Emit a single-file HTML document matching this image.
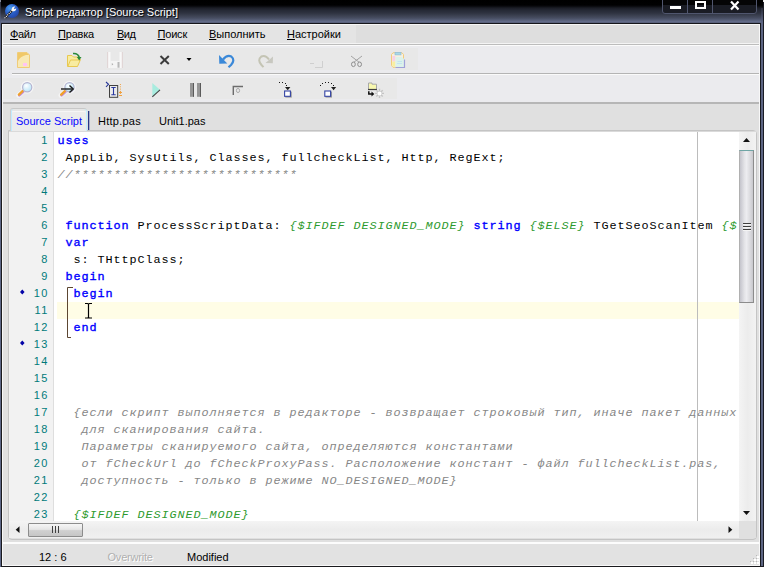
<!DOCTYPE html>
<html><head><meta charset="utf-8">
<style>
*{margin:0;padding:0;box-sizing:border-box}
html,body{width:764px;height:567px;overflow:hidden;background:#e0e0e0;font-family:"Liberation Sans",sans-serif;}
.abs,#win div,#win svg{position:absolute}
#win{position:absolute;left:0;top:0;width:764px;height:567px;background:#e0e0e0;overflow:hidden}
#title{left:0;top:0;width:764px;height:23px;background:linear-gradient(#000 0,#010102 5px,#0c0d12 6.5px,#1b1d26 8px,#262a36 10.5px,#2e3240 13px,#3b4050 15.5px,#474d61 18px,#5a627c 20.5px,#626b88 21.5px,#565d76 23px)}
#tdark{left:1px;top:23px;width:760px;height:1px;background:#15161b}
#twhite{left:2px;top:24px;width:758px;height:1px;background:#f6f6f6}
#ttext{left:25px;top:6px;color:#fff;font-size:11px;white-space:nowrap;text-shadow:1px 1px 1px #000}
#lb0{left:0;top:2px;width:1px;height:565px;background:linear-gradient(#30343f 0,#3a4054 10px,#5c6686 20px,#5c6686 100%)}
#ctl{left:0;top:0;width:1px;height:2px;background:#8a8e9c}
#ctr{left:763px;top:0;width:1px;height:2px;background:#e8e8e8}
#lb1{left:1px;top:23px;width:1px;height:543px;background:#1a1a1e}
#lb2{left:2px;top:24px;width:1px;height:541px;background:#f8f8f8}
#rb0{left:760px;top:23px;width:1px;height:543px;background:#1a1c22}
#rb1{left:761px;top:8px;width:2px;height:559px;background:linear-gradient(#2a2d3a 0,#5c6482 14px,#5c6482 100%)}
#rb2{left:763px;top:0;width:1px;height:567px;background:#1a1c24}
#rbw{left:759px;top:24px;width:1px;height:541px;background:#f8f8f8}
#bbw{left:2px;top:565px;width:758px;height:1px;background:#f8f8f8}
#bb{left:1px;top:566px;width:762px;height:1px;background:#1a1a1e}
#menu{left:3px;top:25px;width:756px;height:18px;background:linear-gradient(90deg,#e4e4e4 0,#e4e4e4 353px,#dedede 353px)}
#menuline0{left:3px;top:43px;width:756px;height:1px;background:#f4f4f4}
#menu span{position:absolute;top:3px;font-size:11px;color:#000;white-space:nowrap}
#menuline{left:3px;top:44px;width:756px;height:1px;background:#bcbcbc}
#menuline2{left:3px;top:45px;width:756px;height:1px;background:#fbfbfb}
#tbarea{left:3px;top:46px;width:756px;height:56px;background:#ebebee}
#tb1{left:3px;top:48px;width:415px;height:22px;background:#e8e8e8}
#tb2{left:3px;top:78px;width:394px;height:21px;background:#e8e8e8}
#tbsep{left:12px;top:73px;width:747px;height:1px;background:#b4b4b4}
#tbsep2{left:12px;top:74px;width:747px;height:1px;background:#fafafa}
#tbbot{left:3px;top:102px;width:756px;height:2px;background:#b6b6b6}
#tab1{left:10px;top:108px;width:77px;height:23px;background:#ececec;border-left:1px solid #d0d0d0;border-top:1px solid #c8c8c8;border-radius:3px 3px 0 0;box-shadow:inset 1px 0 0 #c0ecff,inset -1px 0 0 #c0f0ff,inset 0 2px 0 #e6e6e6,inset 0 3px 0 #f6f6f6}
#tab1r{left:88px;top:111px;width:1px;height:19px;background:#283888;box-shadow:1px 0 0 rgba(40,56,136,0.3)}
#edtop{left:9px;top:131px;width:747px;height:1px;background:#dadada}
.tabt{top:115px;font-size:11px;white-space:nowrap}
#panel{left:8px;top:130px;width:749px;height:410px;border:1px solid #c4c4c4;border-radius:0 4px 4px 4px;background:#e0e0e0}
#editor{left:9px;top:131px;width:730px;height:390px;background:#fff;overflow:hidden}
#gutter{left:0;top:0;width:45px;height:390px;background:#f2f2f2;border-right:1px solid #dedede}
.ln{left:0;width:39.7px;text-align:right;font-family:"Liberation Sans",sans-serif;font-size:11px;letter-spacing:1.4px;color:#007a7a;height:17px;line-height:17px}
.cl{left:48.5px;height:17px;line-height:19px;font-family:"Liberation Mono",monospace;font-size:11.8px;letter-spacing:0.919px;white-space:pre;color:#000}
.k{color:#0000ff;-webkit-text-stroke:0.35px #0000ff}
.d{color:#2e9a2e;font-style:italic}
.c{color:#878787;font-style:italic}
#cur{left:48px;top:171px;width:682px;height:17px;background:#fffde6}
#margin{left:688px;top:0;width:1px;height:390px;background:#bcbcbc}
#vs{left:739px;top:131px;width:17px;height:390px;background:linear-gradient(90deg,#f4f4f4,#ececec 50%,#f2f2f2)}
#vthumb{left:739px;top:150px;width:15px;height:153px;border:1px solid #8c8c8c;border-top-color:#6fa5a5;border-left-color:#b0b0b0;background:linear-gradient(90deg,#c4c4cc 0,#e4e4e8 35%,#ececf0 50%,#dcdce0 75%,#c8c8cc 100%)}
#hs{left:9px;top:521px;width:730px;height:17px;background:linear-gradient(#f4f4f4,#ececec 50%,#f0f0f0)}
#hthumb{left:28px;top:523px;width:55px;height:14px;border:1px solid #8c8c8c;border-radius:1px;background:linear-gradient(#f6f6f6 0,#e6e6e6 45%,#d0d0d0 55%,#c6c6c6 100%)}
#corner{left:739px;top:521px;width:17px;height:17px;background:#e0e0e0}
#stw{left:3px;top:542px;width:756px;height:2px;background:#fcfcfc}
#status{left:3px;top:544px;width:756px;height:21px;background:#e2e2e2}
#status span{position:absolute;top:7px;font-size:11px;white-space:nowrap}

</style></head><body>
<div id="win">
<div id="title"></div>
<div id="tdark"></div>
<div id="twhite"></div>
<div id="ttext">Script редактор [Source Script]</div>
<div id="menu">
<span style="left:7px;letter-spacing:-0.4px"><u>Ф</u>айл</span>
<span style="left:55px;letter-spacing:-0.2px"><u>П</u>равка</span>
<span style="left:114px;letter-spacing:-0.5px"><u>В</u>ид</span>
<span style="left:154.5px;letter-spacing:-0.2px"><u>П</u>оиск</span>
<span style="left:206px"><u>В</u>ыполнить</span>
<span style="left:284px"><u>Н</u>астройки</span>
</div>
<div id="menuline0"></div>
<div id="menuline"></div>
<div id="menuline2"></div>
<div id="tbarea"></div>
<div id="tb1"></div>
<div id="tb2"></div>
<div id="tbsep"></div>
<div id="tbsep2"></div>
<div id="tbbot"></div>
<div id="panel"></div>
<div id="tab1"></div>
<div id="tab1r"></div>
<div class="tabt" style="left:16px;color:#0808ff">Source Script</div>
<div class="tabt" style="left:98px;color:#000;letter-spacing:0.25px">Http.pas</div>
<div class="tabt" style="left:159px;color:#000">Unit1.pas</div>
<div id="editor">
<div id="gutter"></div>
<div id="cur"></div>
<div id="margin"></div>
<div class="ln" style="top:1px">1</div>
<div class="cl" style="top:1px"><span class="k">uses</span></div>
<div class="ln" style="top:18px">2</div>
<div class="cl" style="top:18px"> AppLib, SysUtils, Classes, fullcheckList, Http, RegExt;</div>
<div class="ln" style="top:35px">3</div>
<div class="cl" style="top:35px"><span class="c">//****************************</span></div>
<div class="ln" style="top:52px">4</div>
<div class="ln" style="top:69px">5</div>
<div class="ln" style="top:86px">6</div>
<div class="cl" style="top:86px"> <span class="k">function</span> ProcessScriptData: <span class="d">{$IFDEF DESIGNED_MODE}</span> <span class="k">string</span> <span class="d">{$ELSE}</span> TGetSeoScanItem <span class="d">{$</span></div>
<div class="ln" style="top:103px">7</div>
<div class="cl" style="top:103px"> <span class="k">var</span></div>
<div class="ln" style="top:120px">8</div>
<div class="cl" style="top:120px">  s: THttpClass;</div>
<div class="ln" style="top:137px">9</div>
<div class="cl" style="top:137px"> <span class="k">begin</span></div>
<div class="ln" style="top:154px">10</div>
<div class="cl" style="top:154px">  <span class="k">begin</span></div>
<div class="ln" style="top:171px">11</div>
<div class="ln" style="top:188px">12</div>
<div class="cl" style="top:188px">  <span class="k">end</span></div>
<div class="ln" style="top:205px">13</div>
<div class="ln" style="top:222px">14</div>
<div class="ln" style="top:239px">15</div>
<div class="ln" style="top:256px">16</div>
<div class="ln" style="top:273px">17</div>
<div class="cl" style="top:273px">  <span class="c">{если скрипт выполняется в редакторе - возвращает строковый тип, иначе пакет данных</span></div>
<div class="ln" style="top:290px">18</div>
<div class="cl" style="top:290px">   <span class="c">для сканирования сайта.</span></div>
<div class="ln" style="top:307px">19</div>
<div class="cl" style="top:307px">   <span class="c">Параметры сканируемого сайта, определяются константами</span></div>
<div class="ln" style="top:324px">20</div>
<div class="cl" style="top:324px">   <span class="c">от fCheckUrl до fCheckProxyPass. Расположение констант - файл fullcheckList.pas,</span></div>
<div class="ln" style="top:341px">21</div>
<div class="cl" style="top:341px">   <span class="c">доступность - только в режиме NO_DESIGNED_MODE}</span></div>
<div class="ln" style="top:358px">22</div>
<div class="ln" style="top:375px">23</div>
<div class="cl" style="top:375px">  <span class="d">{$IFDEF DESIGNED_MODE}</span></div>
</div>
<div id="vs"></div>
<div id="vthumb"></div>
<div id="hs"></div>
<div id="hthumb"></div>
<div id="corner"></div>
<div id="edtop"></div>
<div id="stw"></div>
<div id="status">
<span style="left:36px;color:#000">12 : 6</span>
<span style="left:104.5px;color:#b0b0b0;text-shadow:1px 1px 0 #fff;letter-spacing:-0.2px">Overwrite</span>
<span style="left:184px;color:#000">Modified</span>
</div>
<div id="lb0"></div>
<div id="lb1"></div>
<div id="lb2"></div>
<div id="rbw"></div>
<div id="rb0"></div>
<div id="rb1"></div>
<div id="rb2"></div>
<div id="bbw"></div>
<div id="bb"></div>
<div id="ctl"></div>
<div id="ctr"></div>
<!-- title icon -->
<svg style="left:2px;top:2px" width="20" height="20" viewBox="2 2 20 20">
<defs><radialGradient id="gl" cx="0.35" cy="0.3" r="0.75"><stop offset="0" stop-color="#4aa0f0"/><stop offset="0.5" stop-color="#2a62cc"/><stop offset="1" stop-color="#2446a8"/></radialGradient></defs>
<circle cx="12" cy="11" r="7" fill="url(#gl)"/>
<path d="M4.6 18.2 L12.4 10.2" stroke="#0c0c14" stroke-width="2.2"/>
<path d="M4.6 18.2 L12.4 10.2" stroke="#f4f4f4" stroke-width="1.3" stroke-dasharray="1.1 0.9"/>
<path d="M11.3 10 L12.2 7.6 Q13.5 6.2 15.4 6.6 L13.9 8.3 L14.6 9.2 L16.3 8.2 Q16.4 10 15 11 L12.6 11.6 Z" fill="#f6f6f6"/>
</svg>
<!-- window controls -->
<svg style="left:660px;top:0" width="100" height="16" viewBox="660 0 100 16">
<path d="M662.5 0 V11 Q662.5 13.5 665 13.5 H754 Q756.5 13.5 756.5 11 V0" fill="#1a1c24" stroke="#50566e" stroke-width="1"/>
<rect x="663" y="0" width="93" height="5" fill="#050506"/>
<path d="M687.5 0 V13.5 M712.5 0 V13.5" stroke="#50566e" stroke-width="1"/>
<rect x="670" y="6" width="11" height="3" fill="#fff"/>
<rect x="696" y="2" width="9" height="6" fill="none" stroke="#fff" stroke-width="2"/>
<path d="M731 1.5 L738.5 9.5 M738.5 1.5 L731 9.5" stroke="#fff" stroke-width="2.2"/>
</svg>
<!-- toolbar 1 -->
<svg style="left:12px;top:48px" width="410" height="24" viewBox="12 48 410 24">
<!-- new -->
<path d="M17.5 52.5 H27 L29.5 55 V67.5 H17.5 Z" fill="#f8e9b4" stroke="#f0cc78" stroke-width="1"/>
<path d="M18 53 H27 L29 55 L26 55 Q20 56.5 18 61 Z" fill="#f0c868"/>
<rect x="23" y="63" width="4" height="3" fill="#ffc4f4"/>
<!-- open -->
<path d="M67.5 55.5 H72 L73.5 57 H78.5 V59 L80.5 59.5 L77.5 66.5 H67.5 Z" fill="#f8eca0" stroke="#e8c850" stroke-width="1"/>
<path d="M68 66 L70.5 60 H80" fill="none" stroke="#e8c850" stroke-width="1"/>
<path d="M73 53.5 Q78 53 79.3 57.5" fill="none" stroke="#2a8a3a" stroke-width="1.6"/>
<path d="M76.8 57 H81.5 L79.2 60.5 Z" fill="#2a8a3a"/>
<!-- save (disabled) -->
<rect x="108" y="52" width="2.5" height="16" fill="#f8f8f8"/>
<rect x="119.5" y="52" width="2.5" height="16" fill="#f8f8f8"/>
<rect x="110.5" y="61" width="9" height="7" fill="#f4f4f4"/>
<path d="M107.7 52 V68 M122.3 52 V68" stroke="#dccccc" stroke-width="0.8"/>
<rect x="117.5" y="62" width="2" height="5.7" fill="#b8b8b8"/>
<path d="M111.8 63 L113.3 64.3 L111.8 65.6 Z" fill="#a8a8a8"/>
<!-- X -->
<path d="M160.5 56 L168.8 64 M168.8 56 L160.5 64" stroke="#3c3c3c" stroke-width="2"/>
<path d="M186.5 58 H191.5 L189 61 Z" fill="#000"/>
<!-- undo -->
<path d="M223 59.5 Q227 54.5 231.3 56.5 Q235.5 60 231 65 L228.5 67.3" fill="none" stroke="#3a88d8" stroke-width="2.2"/>
<path d="M219 55 L219.3 63.8 L227.3 63.5 Z" fill="#3a88d8"/>
<!-- redo -->
<path d="M269 59.5 Q265.5 54.5 261.3 56.5 Q257 60 261.5 65 L263.5 67.2" fill="none" stroke="#c4c4b4" stroke-width="2"/>
<path d="M273 56.5 L272.8 63.3 L265.5 63 Z" fill="#c8c8c0"/>
<!-- copy disabled -->
<path d="M310 63.5 H314 M322.5 61 V67.5 H315" fill="none" stroke="#cfcfcf" stroke-width="1"/>
<!-- cut -->
<path d="M351 56 L359.2 62.3 M362 56 L353.8 62.3" stroke="#9a9a9a" stroke-width="0.9"/>
<ellipse cx="353.4" cy="64.3" rx="1.9" ry="2.3" fill="none" stroke="#8e8e8e" stroke-width="1"/>
<ellipse cx="359.6" cy="64.3" rx="1.9" ry="2.3" fill="none" stroke="#8e8e8e" stroke-width="1"/>
<!-- paste -->
<path d="M393 52.8 H402 L403.5 54.5 V67.3 H393 L391.5 65.5 V54.5 Z" fill="#f6f0e0" stroke="#f2cc7c" stroke-width="1"/>
<rect x="392.3" y="56" width="3" height="5.5" fill="#f8d0e4"/>
<rect x="392.3" y="61.5" width="3" height="5" fill="#f8f0a0"/>
<rect x="395" y="52.3" width="6" height="2.6" fill="#a8d8e8" stroke="#88b8d8" stroke-width="0.6"/>
<path d="M395.5 57 H402 L404.5 59.5 V67.5 H395.5 Z" fill="#dcf2ea"/>
<path d="M404.5 59.5 V67.5 H395.5" fill="none" stroke="#a0a0d8" stroke-width="1.2"/>
<path d="M397.5 61.5 H402 M397 63.5 H402" stroke="#c4e4f0" stroke-width="1"/>
</svg>
<!-- toolbar 2 -->
<svg style="left:12px;top:78px" width="390" height="24" viewBox="12 78 390 24">
<defs><radialGradient id="lens" cx="0.4" cy="0.35" r="0.7"><stop offset="0" stop-color="#fff"/><stop offset="1" stop-color="#b4e4f8"/></radialGradient></defs>
<g>
<circle cx="27.2" cy="87.2" r="6.4" fill="#f6f6f6"/>
<path d="M23.5 91 L18.6 95.4" stroke="#f4f4f4" stroke-width="5" stroke-linecap="round"/>
<path d="M23.2 91.8 L19.3 95.4" stroke="#c490d8" stroke-width="2.6" stroke-linecap="round"/>
<path d="M22.6 91 L18.9 94.6" stroke="#f0a028" stroke-width="2.4" stroke-linecap="round"/>
<circle cx="27.2" cy="87.2" r="4.6" fill="url(#lens)" stroke="#b4b4d0" stroke-width="1.2"/>
</g>
<g transform="translate(42.3 0)">
<circle cx="27.2" cy="87.2" r="6.4" fill="#f6f6f6"/>
<path d="M23.5 91 L18.6 95.4" stroke="#f4f4f4" stroke-width="5" stroke-linecap="round"/>
<path d="M23.2 91.8 L19.3 95.4" stroke="#c490d8" stroke-width="2.6" stroke-linecap="round"/>
<path d="M22.6 91 L18.9 94.6" stroke="#f0a028" stroke-width="2.4" stroke-linecap="round"/>
<circle cx="27.2" cy="87.2" r="4.6" fill="url(#lens)" stroke="#b4b4d0" stroke-width="1.2"/>
</g>
<path d="M61 89 H72.5" stroke="#1c1c1c" stroke-width="1.4"/>
<path d="M69.5 85.5 L73.2 89 L69.5 92.5" fill="none" stroke="#1c1c1c" stroke-width="1.4"/>
<!-- run to cursor -->
<path d="M106 82 L108.5 84.3 L106 86.8" fill="none" stroke="#283898" stroke-width="1.1"/>
<rect x="109.5" y="85.5" width="8.2" height="11.8" fill="#ececec" stroke="#404040" stroke-width="1"/>
<path d="M111.3 87.5 H115.7 M111.3 94.8 H115.7 M113.5 87.5 V94.8" stroke="#2838a0" stroke-width="1.1"/>
<path d="M120.4 84 V92" stroke="#f0a040" stroke-width="1" stroke-dasharray="1 1.3"/>
<path d="M119 92.5 H122 M120.4 91 V94 M119 95.5 H122" stroke="#f0a040" stroke-width="1"/>
<!-- run -->
<path d="M152.3 83 L160 89.8 L152.3 96.8 Z" fill="#a8ecdf"/>
<path d="M152.3 96.8 L160 89.8" stroke="#404040" stroke-width="1.1"/>
<!-- pause -->
<rect x="190" y="83" width="4" height="13.8" fill="#969696"/>
<rect x="193" y="83" width="1" height="13.8" fill="#5a5a5a"/>
<rect x="197" y="83" width="4" height="13.8" fill="#969696"/>
<rect x="200" y="83" width="1" height="13.8" fill="#5a5a5a"/>
<!-- stop -->
<path d="M233.3 95 V86.5 H243" fill="none" stroke="#6c6c6c" stroke-width="1.4"/>
<ellipse cx="238" cy="90.5" rx="1.6" ry="2.1" fill="none" stroke="#a4a4a4" stroke-width="0.9"/>
<!-- step into -->
<g fill="#181818"><rect x="279" y="82" width="1" height="1"/><rect x="282" y="82" width="1" height="1"/><rect x="285" y="83" width="1" height="1"/><rect x="286" y="85" width="1" height="1"/><rect x="320" y="85" width="1" height="1"/><rect x="322" y="83" width="1" height="1"/><rect x="325" y="82" width="1" height="1"/><rect x="328" y="82" width="1" height="1"/><rect x="331" y="83" width="1" height="1"/><rect x="333" y="85" width="1" height="1"/></g>
<path d="M285 87 H290.4 L287.7 90.2 Z" fill="#202020"/>
<rect x="285.3" y="91.6" width="6.5" height="6" fill="#9c9c9c"/>
<rect x="284.6" y="91" width="5.8" height="5.3" fill="#fff" stroke="#3444a4" stroke-width="1.1"/>
<!-- step over -->
<path d="M331 87 H336.2 L333.6 90.2 Z" fill="#202020"/>
<rect x="325.5" y="91.6" width="6.5" height="6" fill="#9c9c9c"/>
<rect x="324.8" y="91" width="5.8" height="5.3" fill="#fff" stroke="#3444a4" stroke-width="1.1"/>
<!-- folder + star -->
<path d="M368.5 89.3 V83 H372 V84.2 H376.5 V89.3" fill="#f8f8b0" stroke="#a8a8a8" stroke-width="1"/>
<path d="M368 89.5 H377" stroke="#404040" stroke-width="1.2"/>
<path d="M368.8 91.3 V94 H372" fill="none" stroke="#101010" stroke-width="1.5"/>
<path d="M371.5 91.6 L374.3 94 L371.5 96.4 Z" fill="#101010"/>
<path d="M379.5 88.8 V98 M375 93.4 H384 M376.3 90.2 L382.7 96.6 M382.7 90.2 L376.3 96.6" stroke="#c4c4c4" stroke-width="1.4"/>
<circle cx="379.5" cy="93.4" r="2" fill="#fff"/>
</svg>
<!-- editor overlays -->
<svg style="left:9px;top:131px" width="748" height="410" viewBox="9 131 748 410">
<!-- bullets -->
<path d="M22.3 289.5 L24.6 292 L22.3 294.5 L20 292 Z M22.3 340.5 L24.6 343 L22.3 345.5 L20 343 Z" fill="#0404a8"/>
<!-- bracket -->
<path d="M73 287.5 H67.5 V337.5 H71" fill="none" stroke="#5c4632" stroke-width="1"/>
<!-- I-beam -->
<path d="M85 303.5 H87.5 Q88.5 303.6 88.5 304.5 V317 Q88.5 317.9 87.5 318 H85 M92 303.5 H89.5 Q88.5 303.6 88.5 304.5 M92 318 H89.5 Q88.5 317.9 88.5 317" fill="none" stroke="#000" stroke-width="1.2"/>
<!-- v scroll arrows -->
<path d="M743 142 L746.5 138 L750 142 Z" fill="#111"/>
<path d="M743 511 L746.5 515 L750 511 Z" fill="#111"/>
<!-- v grip -->
<path d="M743 223.5 H751 M743 226.5 H751 M743 229.5 H751" stroke="#404040" stroke-width="1"/>
<path d="M743 224.5 H751 M743 227.5 H751 M743 230.5 H751" stroke="#f4f4f4" stroke-width="1"/>
<!-- h scroll arrows -->
<path d="M19.5 526.3 L15.7 529.7 L19.5 533 Z" fill="#111"/>
<path d="M728.5 526.3 L732.3 529.7 L728.5 533 Z" fill="#111"/>
<!-- h grip -->
<path d="M52.5 526 V533 M55.5 526 V533 M58.5 526 V533" stroke="#404040" stroke-width="1"/>
</svg>
<!-- size grip -->
<svg style="left:749px;top:554px" width="11" height="11" viewBox="749 554 11 11">
<g fill="#fff"><rect x="757" y="556" width="2" height="2"/><rect x="754" y="559" width="2" height="2"/><rect x="757" y="559" width="2" height="2"/><rect x="751" y="562" width="2" height="2"/><rect x="754" y="562" width="2" height="2"/><rect x="757" y="562" width="2" height="2"/></g>
<g fill="#b8b8b8"><rect x="756" y="555" width="1" height="1"/><rect x="753" y="558" width="1" height="1"/><rect x="756" y="558" width="1" height="1"/><rect x="750" y="561" width="1" height="1"/><rect x="753" y="561" width="1" height="1"/><rect x="756" y="561" width="1" height="1"/></g>
</svg>

</div>

</body></html>
